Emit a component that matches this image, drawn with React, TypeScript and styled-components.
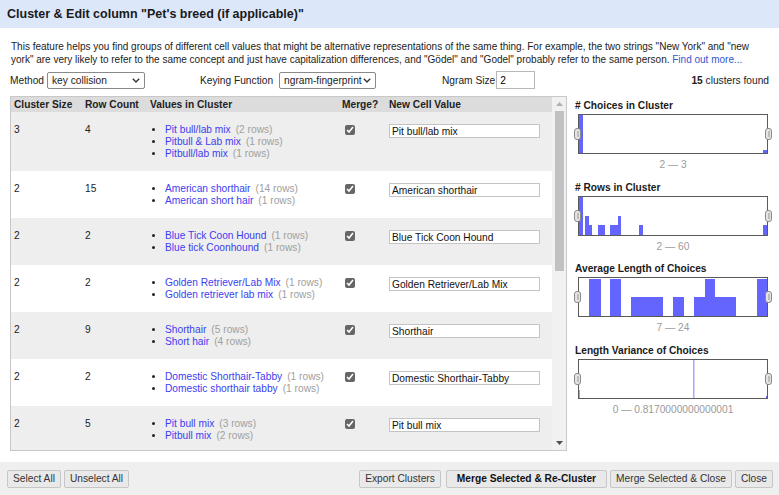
import React from "react";
import styled, { createGlobalStyle } from "styled-components";

const GlobalStyle = createGlobalStyle`
  body {
    margin: 0;
    font-family: "Liberation Sans", Arial, sans-serif;
    font-size: 10.2px;
    color: #222;
    background: #fff;
  }
`;

const Dialog = styled.div`
  width: 779px;
  height: 495px;
  display: flex;
  flex-direction: column;
  background: #fff;
  overflow: hidden;
`;

const Header = styled.div`
  height: 28px;
  flex: none;
  display: flex;
  align-items: center;
  padding: 0 7px;
  background: #dce8fa;
  font-size: 12.5px;
  font-weight: bold;
  color: #1a1a1a;
`;

const Body = styled.div`
  flex: 1;
  min-height: 0;
  display: flex;
  flex-direction: column;
  padding: 12px 10px 0;
`;

const Description = styled.p`
  margin: 0 -4px 0 1px;
  line-height: 13px;
  font-size: 10px;
`;

const Link = styled.a`
  color: #3355cc;
  text-decoration: none;
`;

const Controls = styled.div`
  display: grid;
  grid-template-columns: 190px 242px 1fr auto;
  align-items: center;
  height: 18px;
  margin-top: 5px;
`;

const Field = styled.label<{ $gap: number }>`
  display: flex;
  align-items: center;
  gap: ${(p) => p.$gap}px;
`;

const SelectWrap = styled.span`
  position: relative;
  display: inline-flex;
`;

const Select = styled.select<{ $w: number }>`
  appearance: none;
  width: ${(p) => p.$w}px;
  height: 17px;
  font-family: inherit;
  font-size: 10.2px;
  padding: 0 12px 0 4px;
  border: 1px solid #8a8a8a;
  border-radius: 2px;
  background: #fff;
  color: #222;
`;

const Chevron = styled.svg`
  position: absolute;
  right: 5px;
  top: 6px;
  pointer-events: none;
`;

const SmallInput = styled.input`
  width: 39px;
  height: 18px;
  box-sizing: border-box;
  border: 1px solid #b8b8b8;
  font-family: inherit;
  font-size: 10.2px;
  padding: 0 3px;
`;

const Found = styled.div`
  text-align: right;
`;

const Main = styled.div`
  display: flex;
  gap: 8px;
  margin-top: 7px;
  height: 355px;
  flex: none;
`;

const TableFrame = styled.div`
  width: 557px;
  box-sizing: border-box;
  border: 1px solid #c8c8c8;
  display: flex;
  overflow: hidden;
`;

const TableScroll = styled.div`
  flex: 1;
  overflow: hidden;
`;

const Table = styled.table`
  width: 542px;
  border-collapse: collapse;
  table-layout: fixed;
`;

const HeadCell = styled.th<{ $w: number }>`
  width: ${(p) => p.$w}px;
  text-align: left;
  font-weight: bold;
  background: #dcdcdc;
  padding: 0 3px;
  height: 15px;
  line-height: 15px;
  color: #222;
  white-space: nowrap;
`;

const Row = styled.tr<{ $striped: boolean }>`
  background: ${(p) => (p.$striped ? "#eeeeee" : "#ffffff")};
`;

const Cell = styled.td`
  vertical-align: top;
  padding: 12px 3px 11px;
  line-height: 12px;
`;

const ValueList = styled.ul`
  margin: 0;
  padding-left: 15px;
  list-style: disc;
`;

const ValueItem = styled.li`
  line-height: 12px;
  white-space: nowrap;
  &::marker {
    color: #222;
  }
`;

const ValueLink = styled.a`
  color: #3d3df0;
  text-decoration: none;
`;

const RowCount = styled.span`
  color: #a0a0a0;
  margin-left: 5px;
`;

const Check = styled.input`
  width: 10px;
  height: 10px;
  margin: 1px 0 0 3px;
  accent-color: #666;
`;

const CellInput = styled.input`
  width: 151px;
  height: 14px;
  box-sizing: border-box;
  border: 1px solid #c4c4c4;
  font-family: inherit;
  font-size: 10.2px;
  padding: 0 2px;
  margin: 0;
  color: #111;
`;

const Scrollbar = styled.div`
  width: 14px;
  flex: none;
  background: #f1f1f1;
  display: flex;
  flex-direction: column;
  align-items: center;
`;

const Arrow = styled.div`
  height: 14px;
  display: flex;
  align-items: center;
  justify-content: center;
`;

const Track = styled.div`
  flex: 1;
  width: 100%;
  display: flex;
  flex-direction: column;
  align-items: center;
`;

const Thumb = styled.div`
  width: 9px;
  height: 160px;
  background: #c1c1c1;
`;

const Side = styled.div`
  flex: 1;
  padding-top: 3px;
`;

const ChartBlock = styled.div`
  margin-bottom: 9.5px;
`;

const ChartTitle = styled.div`
  font-weight: bold;
  line-height: 13px;
  color: #1a1a1a;
`;

const ChartBox = styled.div`
  position: relative;
  width: 190px;
  height: 40px;
  margin: 2px 0 0 3px;
  box-sizing: border-box;
  border: 1px solid #5a5a5a;
`;

const Handle = styled.div<{ $side: "left" | "right" }>`
  position: absolute;
  top: 13px;
  ${(p) => (p.$side === "left" ? "left: -5px;" : "right: -5px;")}
  width: 7px;
  height: 12px;
  box-sizing: border-box;
  border: 1px solid #8a8a8a;
  border-radius: 3px;
  background: #e4e4e4;
  &::after {
    content: "";
    position: absolute;
    left: 1.5px;
    top: 2px;
    width: 2px;
    height: 6px;
    background: #bdbdbd;
  }
`;

const ChartLabel = styled.div`
  width: 190px;
  margin: 4px 0 0 3px;
  text-align: center;
  line-height: 13px;
  color: #9a9a9a;
`;

const Footer = styled.div`
  height: 33px;
  flex: none;
  background: #efefef;
  display: flex;
  align-items: center;
  padding: 0 6px 0 7px;
  gap: 3px;
`;

const Spacer = styled.div`
  flex: 1;
`;

const Button = styled.button<{ $primary?: boolean }>`
  height: 18px;
  padding: 0 ${(p) => (p.$primary ? "10px" : "5px")};
  margin-left: ${(p) => (p.$primary ? "2px" : "0")};
  border: 1px solid #c6c6c6;
  border-radius: 2px;
  background: #e9e9e9;
  font-family: inherit;
  font-size: 10.2px;
  font-weight: ${(p) => (p.$primary ? "bold" : "normal")};
  color: ${(p) => (p.$primary ? "#111" : "#333")};
  cursor: pointer;
`;

type Cluster = {
  size: number;
  count: number;
  values: [string, number][];
  merged: string;
};

const clusters: Cluster[] = [
  {
    size: 3,
    count: 4,
    values: [
      ["Pit bull/lab mix", 2],
      ["Pitbull & Lab mix", 1],
      ["Pitbull/lab mix", 1],
    ],
    merged: "Pit bull/lab mix",
  },
  {
    size: 2,
    count: 15,
    values: [
      ["American shorthair", 14],
      ["American short hair", 1],
    ],
    merged: "American shorthair",
  },
  {
    size: 2,
    count: 2,
    values: [
      ["Blue Tick Coon Hound", 1],
      ["Blue tick Coonhound", 1],
    ],
    merged: "Blue Tick Coon Hound",
  },
  {
    size: 2,
    count: 2,
    values: [
      ["Golden Retriever/Lab Mix", 1],
      ["Golden retriever lab mix", 1],
    ],
    merged: "Golden Retriever/Lab Mix",
  },
  {
    size: 2,
    count: 9,
    values: [
      ["Shorthair", 5],
      ["Short hair", 4],
    ],
    merged: "Shorthair",
  },
  {
    size: 2,
    count: 2,
    values: [
      ["Domestic Shorthair-Tabby", 1],
      ["Domestic shorthair tabby", 1],
    ],
    merged: "Domestic Shorthair-Tabby",
  },
  {
    size: 2,
    count: 5,
    values: [
      ["Pit bull mix", 3],
      ["Pitbull mix", 2],
    ],
    merged: "Pit bull mix",
  },
];

// bars: [x, width, height, colour] in a 188x38 box
type Bar = [number, number, number, string?];

const charts: { title: string; range: string; bars: Bar[] }[] = [
  {
    title: "# Choices in Cluster",
    range: "2 — 3",
    bars: [
      [0, 4, 38],
      [184, 4, 3],
    ],
  },
  {
    title: "# Rows in Cluster",
    range: "2 — 60",
    bars: [
      [0, 4, 38],
      [6, 4, 19],
      [10, 3, 10],
      [19, 7, 10],
      [31, 4, 10],
      [35, 4, 10],
      [39, 3, 19],
      [60, 4, 10],
      [184, 4, 10],
    ],
  },
  {
    title: "Average Length of Choices",
    range: "7 — 24",
    bars: [
      [10, 12, 37],
      [31, 11, 37],
      [52, 32, 19],
      [94, 11, 19],
      [115, 11, 19],
      [126, 10, 37],
      [136, 21, 19],
      [178, 10, 37],
    ],
  },
  {
    title: "Length Variance of Choices",
    range: "0 — 0.8170000000000001",
    bars: [
      [0, 1, 8, "#9a9aff"],
      [114, 1.5, 38, "#a8a8ff"],
      [187, 1, 2, "#6464ff"],
    ],
  },
];

function Histogram({ bars }: { bars: Bar[] }) {
  return (
    <svg width="188" height="38" style={{ display: "block" }}>
      {bars.map(([x, w, h, c], i) => (
        <rect key={i} x={x} y={38 - h} width={w} height={h} fill={c || "#6464ff"} />
      ))}
    </svg>
  );
}

function Dropdown({ width, value, options }: { width: number; value: string; options: string[] }) {
  return (
    <SelectWrap>
      <Select $w={width} defaultValue={value}>
        {options.map((o) => (
          <option key={o}>{o}</option>
        ))}
      </Select>
      <Chevron width="8" height="5" viewBox="0 0 8 5">
        <path d="M0.8 0.8 L4 4 L7.2 0.8" fill="none" stroke="#333" strokeWidth="1.4" />
      </Chevron>
    </SelectWrap>
  );
}

export default function App() {
  return (
    <Dialog>
      <GlobalStyle />
      <Header>Cluster &amp; Edit column "Pet's breed (if applicable)"</Header>
      <Body>
        <Description>
          This feature helps you find groups of different cell values that might be alternative
          representations of the same thing. For example, the two strings "New York" and "new
          york" are very likely to refer to the same concept and just have capitalization
          differences, and "Gödel" and "Godel" probably refer to the same person.{" "}
          <Link href="#">Find out more...</Link>
        </Description>

        <Controls>
          <Field $gap={3}>
            Method
            <Dropdown
              width={98}
              value="key collision"
              options={["key collision", "nearest neighbor"]}
            />
          </Field>
          <Field $gap={6}>
            Keying Function
            <Dropdown
              width={97}
              value="ngram-fingerprint"
              options={["fingerprint", "ngram-fingerprint", "metaphone3", "cologne-phonetic"]}
            />
          </Field>
          <Field $gap={1}>
            Ngram Size
            <SmallInput defaultValue="2" />
          </Field>
          <Found>
            <b>15</b> clusters found
          </Found>
        </Controls>

        <Main>
          <TableFrame>
            <TableScroll>
              <Table>
                <thead>
                  <tr>
                    <HeadCell $w={65}>Cluster Size</HeadCell>
                    <HeadCell $w={59}>Row Count</HeadCell>
                    <HeadCell $w={186}>Values in Cluster</HeadCell>
                    <HeadCell $w={41}>Merge?</HeadCell>
                    <HeadCell $w={161}>New Cell Value</HeadCell>
                  </tr>
                </thead>
                <tbody>
                  {clusters.map((c, i) => (
                    <Row key={i} $striped={i % 2 === 0}>
                      <Cell>{c.size}</Cell>
                      <Cell>{c.count}</Cell>
                      <Cell>
                        <ValueList>
                          {c.values.map(([v, n]) => (
                            <ValueItem key={v}>
                              <ValueLink href="#">{v}</ValueLink>
                              <RowCount>({n} rows)</RowCount>
                            </ValueItem>
                          ))}
                        </ValueList>
                      </Cell>
                      <Cell>
                        <Check type="checkbox" defaultChecked />
                      </Cell>
                      <Cell>
                        <CellInput defaultValue={c.merged} />
                      </Cell>
                    </Row>
                  ))}
                </tbody>
              </Table>
            </TableScroll>
            <Scrollbar>
              <Arrow>
                <svg width="7" height="4">
                  <path d="M0 4 L3.5 0 L7 4 Z" fill="#b0b0b0" />
                </svg>
              </Arrow>
              <Track>
                <Thumb />
              </Track>
              <Arrow>
                <svg width="7" height="4">
                  <path d="M0 0 L3.5 4 L7 0 Z" fill="#505050" />
                </svg>
              </Arrow>
            </Scrollbar>
          </TableFrame>

          <Side>
            {charts.map((ch) => (
              <ChartBlock key={ch.title}>
                <ChartTitle>{ch.title}</ChartTitle>
                <ChartBox>
                  <Histogram bars={ch.bars} />
                  <Handle $side="left" />
                  <Handle $side="right" />
                </ChartBox>
                <ChartLabel>{ch.range}</ChartLabel>
              </ChartBlock>
            ))}
          </Side>
        </Main>
      </Body>

      <Footer>
        <Button>Select All</Button>
        <Button>Unselect All</Button>
        <Spacer />
        <Button>Export Clusters</Button>
        <Button $primary>Merge Selected &amp; Re-Cluster</Button>
        <Button>Merge Selected &amp; Close</Button>
        <Button>Close</Button>
      </Footer>
    </Dialog>
  );
}
